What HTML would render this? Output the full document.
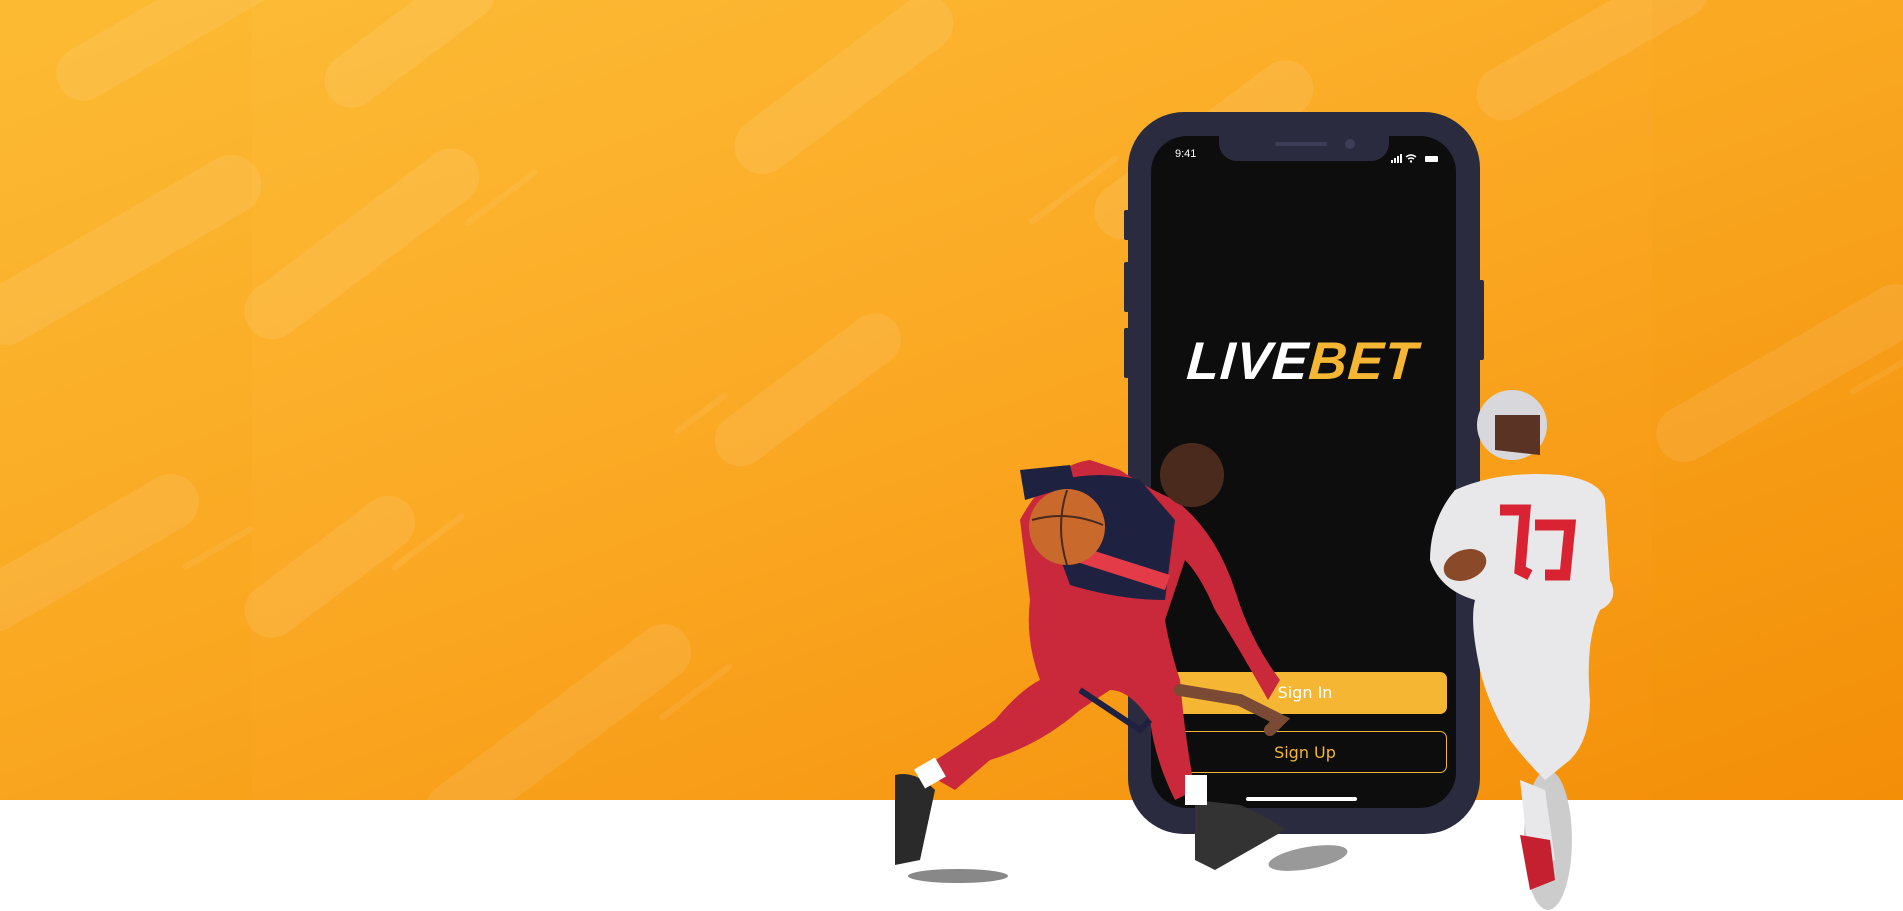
<!DOCTYPE html>
<html><head><meta charset="utf-8"><style>
*{margin:0;padding:0;box-sizing:border-box}
body{width:1903px;height:911px;overflow:hidden;background:#fff;font-family:"Liberation Sans",sans-serif;position:relative}
#bg{position:absolute;left:0;top:0;width:1903px;height:800px;background:linear-gradient(160deg,#fdbd37 0%,#fbaa25 45%,#f48e08 100%);overflow:hidden}
.side{position:absolute;top:0;height:800px;background:rgba(240,150,0,0.06)}
.pill{position:absolute;border-radius:40px;background:rgba(255,255,255,0.09);transform-origin:left center}
.line{position:absolute;height:6px;border-radius:3px;background:rgba(255,255,255,0.07);transform-origin:left center}
.phone{position:absolute;left:1128px;top:112px;width:352px;height:722px;background:#2b2b40;border-radius:56px}
.screen{position:absolute;left:1151px;top:136px;width:305px;height:672px;background:#0d0d0d;border-radius:36px;overflow:hidden}
.notch{position:absolute;left:68px;top:-2px;width:170px;height:27px;background:#2b2b40;border-radius:0 0 18px 18px}
.btn{position:absolute;left:12px;width:284px;height:42px;border-radius:7px;text-align:center;line-height:42px;font-size:16px;font-family:"DejaVu Sans",sans-serif}
</style></head><body>
<div id="bg">
 <div class="side" style="left:0;width:252px"></div>
 <div class="side" style="left:1652px;width:251px"></div>
 <div class="pill" style="left:60px;top:60px;width:250px;height:54px;transform:rotate(-30deg)"></div>
 <div class="pill" style="left:-20px;top:300px;width:320px;height:60px;transform:rotate(-30deg)"></div>
 <div class="pill" style="left:-30px;top:590px;width:260px;height:56px;transform:rotate(-30deg)"></div>
 <div class="pill" style="left:330px;top:70px;width:200px;height:54px;transform:rotate(-37deg)"></div>
 <div class="pill" style="left:250px;top:300px;width:280px;height:56px;transform:rotate(-37deg)"></div>
 <div class="pill" style="left:740px;top:135px;width:260px;height:56px;transform:rotate(-37deg)"></div>
 <div class="pill" style="left:1100px;top:200px;width:260px;height:56px;transform:rotate(-37deg)"></div>
 <div class="pill" style="left:720px;top:430px;width:220px;height:52px;transform:rotate(-37deg)"></div>
 <div class="pill" style="left:250px;top:600px;width:200px;height:54px;transform:rotate(-37deg)"></div>
 <div class="pill" style="left:430px;top:800px;width:320px;height:56px;transform:rotate(-37deg)"></div>
 <div class="pill" style="left:1480px;top:80px;width:260px;height:54px;transform:rotate(-30deg)"></div>
 <div class="pill" style="left:1660px;top:420px;width:300px;height:56px;transform:rotate(-30deg)"></div>
 <div class="line" style="left:465px;top:222px;width:90px;transform:rotate(-37deg)"></div>
 <div class="line" style="left:392px;top:566px;width:90px;transform:rotate(-37deg)"></div>
 <div class="line" style="left:183px;top:565px;width:80px;transform:rotate(-30deg)"></div>
 <div class="line" style="left:660px;top:716px;width:90px;transform:rotate(-37deg)"></div>
 <div class="line" style="left:675px;top:430px;width:65px;transform:rotate(-37deg)"></div>
 <div class="line" style="left:1030px;top:220px;width:110px;transform:rotate(-37deg)"></div>
 <div class="line" style="left:1850px;top:390px;width:80px;transform:rotate(-30deg)"></div>
</div>
<div class="phone"></div>
<div style="position:absolute;left:1124px;top:210px;width:6px;height:30px;background:#2b2b40;border-radius:2px"></div>
<div style="position:absolute;left:1124px;top:262px;width:6px;height:50px;background:#2b2b40;border-radius:2px"></div>
<div style="position:absolute;left:1124px;top:328px;width:6px;height:50px;background:#2b2b40;border-radius:2px"></div>
<div style="position:absolute;left:1478px;top:280px;width:6px;height:80px;background:#2b2b40;border-radius:2px"></div>
<div class="screen">
 <div class="notch"><div style="position:absolute;left:56px;top:8px;width:52px;height:4px;border-radius:2px;background:#3d3d55"></div><div style="position:absolute;left:126px;top:5px;width:10px;height:10px;border-radius:5px;background:#3d3d55"></div></div>
 <div style="position:absolute;left:24px;top:12px;color:#fff;font-size:11px">9:41</div>
 <div style="position:absolute;left:240px;top:14px;width:48px;height:8px">
  <svg width="48" height="9"><rect x="0" y="6" width="2" height="3" fill="#fff"/><rect x="3" y="4" width="2" height="5" fill="#fff"/><rect x="6" y="2" width="2" height="7" fill="#fff"/><rect x="9" y="0" width="2" height="9" fill="#fff"/><path d="M15 3 Q20 -1 25 3 M17 5 Q20 3 23 5" stroke="#fff" stroke-width="1.4" fill="none"/><circle cx="20" cy="7.5" r="1.2" fill="#fff"/><rect x="34" y="2" width="13" height="6" rx="1" fill="#fff"/></svg>
 </div>
 <div style="position:absolute;left:36px;top:196px;font-size:53px;font-weight:bold;font-style:italic;letter-spacing:1px;transform:skewX(-4deg);color:#fff;line-height:60px">LIVE<span style="color:#f4b633">BET</span></div>
 <div class="btn" style="top:536px;background:#f4b633;color:#fff">Sign In</div>
 <div class="btn" style="top:595px;border:1px solid #f4b633;color:#f4b633">Sign Up</div>
 <div style="position:absolute;left:95px;top:661px;width:111px;height:4px;border-radius:2px;background:#fff"></div>
</div>
<svg style="position:absolute;left:0;top:0" width="1903" height="911">
 <ellipse cx="958" cy="876" rx="50" ry="7" fill="#888"/>
 <ellipse cx="1308" cy="858" rx="40" ry="11" fill="#999" transform="rotate(-10 1308 858)"/>
 <ellipse cx="1548" cy="840" rx="24" ry="70" fill="#ccc"/>
 <path d="M1020 520 Q1050 465 1090 460 L1120 470 Q1150 490 1175 500 Q1215 530 1235 590 Q1250 640 1280 680 L1268 700 Q1240 650 1215 610 Q1200 575 1185 560 L1165 620 Q1170 650 1180 680 Q1185 740 1195 790 L1175 800 Q1155 760 1150 720 Q1130 690 1110 690 L1080 710 Q1040 745 990 760 L955 790 L920 770 Q960 745 995 720 Q1020 690 1040 680 Q1025 640 1030 600 Z" fill="#c9293a"/>
 <path d="M1060 480 Q1100 470 1140 480 L1175 520 L1165 600 Q1120 600 1070 585 L1050 530 Z" fill="#1e2140"/>
 <path d="M1060 540 L1170 575 L1165 590 L1055 555 Z" fill="#e33b48"/>
 <path d="M1080 690 L1140 730 L1150 720" stroke="#1e2140" stroke-width="6" fill="none"/>
 <circle cx="1192" cy="475" r="32" fill="#4a2a1c"/>
 <path d="M1020 470 L1070 465 L1075 485 L1025 500 Z" fill="#1e2140"/>
 <circle cx="1067" cy="527" r="38" fill="#c96a2c"/>
 <path d="M1032 520 Q1067 510 1103 525 M1067 490 Q1055 527 1067 565" stroke="#4a2a1c" stroke-width="2" fill="none"/>
 <path d="M1180 690 L1240 700 Q1260 710 1280 720 L1270 730" stroke="#7a4a34" stroke-width="12" fill="none" stroke-linecap="round"/>
 <path d="M895 775 Q915 770 935 790 L920 860 L895 865 Z" fill="#2a2a2a"/>
 <path d="M1195 800 L1240 805 Q1275 820 1285 830 L1215 870 L1195 860 Z" fill="#333"/>
 <rect x="1185" y="775" width="22" height="30" fill="#fff"/>
 <rect x="918" y="762" width="24" height="22" fill="#fff" transform="rotate(-30 930 773)"/>
 <path d="M1455 490 Q1500 470 1560 475 Q1600 480 1605 500 L1610 580 Q1620 600 1600 610 Q1585 640 1590 700 Q1590 740 1570 760 L1545 780 Q1525 760 1510 740 Q1485 700 1478 660 Q1470 620 1475 600 Q1440 590 1430 560 Q1430 520 1455 490 Z" fill="#e8e8ea"/>
 <path d="M1500 510 L1525 510 L1520 570 L1530 575 M1535 525 L1570 525 L1565 575 L1545 575" stroke="#d92333" stroke-width="11" fill="none"/>
 <circle cx="1512" cy="425" r="35" fill="#d8d8dc"/>
 <path d="M1495 415 L1540 415 L1540 455 L1495 450 Z" fill="#5a3324"/>
 <ellipse cx="1465" cy="565" rx="22" ry="15" fill="#8a4a2a" transform="rotate(-20 1465 565)"/>
 <path d="M1520 780 L1545 790 L1555 860 L1530 870 Z" fill="#e8e8ea"/>
 <path d="M1520 835 L1550 840 L1555 880 L1530 890 Z" fill="#c42030"/>
</svg>
</body></html>
